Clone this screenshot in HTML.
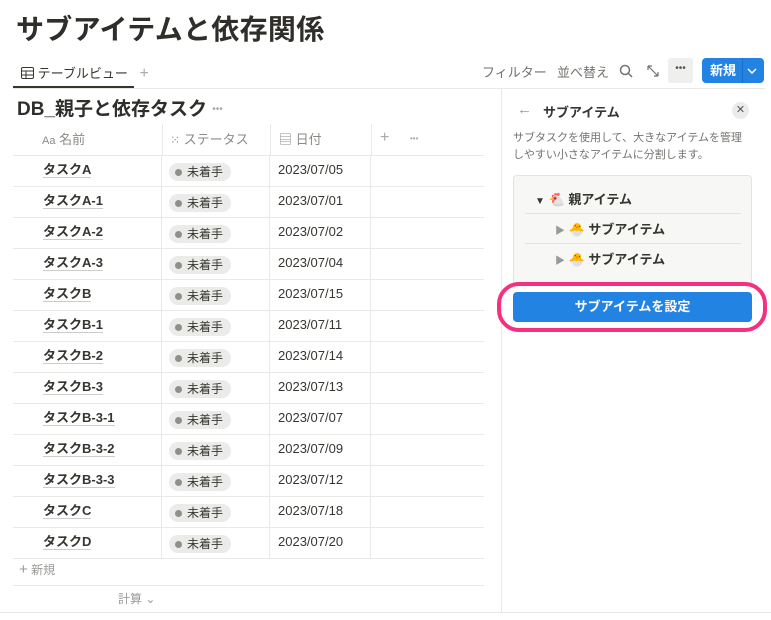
<!DOCTYPE html>
<html><head><meta charset="utf-8"><style>
*{margin:0;padding:0;box-sizing:border-box}
body{width:771px;height:620px;background:#fff;font-family:"Liberation Sans","Noto Sans CJK JP",sans-serif;color:#37352f;position:relative;overflow:hidden;font-size:13px}
.a{position:absolute}
.row{position:absolute;left:13px;width:471px;height:31px;border-bottom:1px solid #e9e9e7}
.c{position:absolute;top:0;height:30px;border-right:1px solid #e9e9e7;line-height:16px}
.nm{left:0;width:149px;padding:6px 0 0 30px;font-weight:bold;font-size:13px}
.nm span{border-bottom:1px solid #ccc}
.st{left:149px;width:108px;padding-top:7px;padding-left:7px}
.dt{left:257px;width:101px;padding:6px 0 0 8px;font-size:13px}
.pill{display:inline-block;background:#ebebea;border-radius:10px;padding:1px 8px 1px 6px;font-size:12px;line-height:16px}
.pill:before{content:"";display:inline-block;width:7px;height:7px;border-radius:50%;background:#918f8a;margin-right:5px;vertical-align:0}
.h{color:#8b8a86;font-size:13px}
</style></head><body>
<div class="a" style="left:16px;top:8px;font-size:28px;font-weight:bold;color:#2f2e2a;letter-spacing:0.3px">サブアイテムと依存関係</div>
<div class="a" style="left:21px;top:63px;font-size:13px">
<svg width="13" height="12" style="vertical-align:-1px"><rect x="0.5" y="0.5" width="12" height="11" rx="1.5" fill="none" stroke="#37352f"/><line x1="0" y1="4" x2="13" y2="4" stroke="#37352f"/><line x1="0" y1="8" x2="13" y2="8" stroke="#37352f"/><line x1="5" y1="4" x2="5" y2="12" stroke="#37352f"/></svg> テーブルビュー <span style="color:#aaa;font-size:16px;margin-left:8px">+</span></div>
<div class="a" style="left:13px;top:86px;width:121px;height:2px;background:#37352f"></div>
<div class="a" style="left:13px;top:88px;width:752px;height:1px;background:#e9e9e7"></div>
<div class="a h" style="left:482px;top:62px;color:#73726e">フィルター</div>
<div class="a h" style="left:557px;top:62px;color:#73726e">並べ替え</div>
<svg class="a" style="left:619px;top:64px" width="14" height="14"><circle cx="6" cy="6" r="4.5" fill="none" stroke="#73726e" stroke-width="1.5"/><line x1="9.5" y1="9.5" x2="13" y2="13" stroke="#73726e" stroke-width="1.5"/></svg>
<svg class="a" style="left:647px;top:65px" width="12" height="12"><path d="M1 1l10 10M1 1v4M1 1h4M11 11v-4M11 11h-4" stroke="#73726e" fill="none" stroke-width="1.2"/></svg>
<div class="a" style="left:668px;top:58px;width:25px;height:25px;background:#efefee;border-radius:3px;color:#555;text-align:center;line-height:22px;font-size:10px">•••</div>
<div class="a" style="left:702px;top:58px;width:62px;height:25px;background:#2383e2;border-radius:4px;color:#fff;font-weight:bold;font-size:13px;line-height:25px;padding-left:8px">新規</div>
<div class="a" style="left:742px;top:58px;width:1px;height:25px;background:#1a6fc4"></div>
<svg class="a" style="left:747px;top:67px" width="10" height="8"><path d="M1 2l4 4 4-4" stroke="#fff" fill="none" stroke-width="1.5"/></svg>

<div class="a" style="left:17px;top:98px;font-size:19px;font-weight:bold;color:#2f2e2a;line-height:24px">DB_親子と依存タスク <span style="color:#aaa;font-size:10px;font-weight:normal;vertical-align:3px">•••</span></div>
<div class="a" style="left:501px;top:89px;width:1px;height:524px;background:#e9e9e7"></div>
<div class="a" style="left:0;top:612px;width:771px;height:1px;background:#e9e9e7"></div>

<div class="row" style="top:124px;height:32px">
<div class="a h" style="left:29px;top:8px;line-height:16px"><span style="font-size:11px">Aa</span> 名前</div>
<div class="a h" style="left:157px;top:8px;line-height:16px"><span style="font-size:12px">⁙</span> ステータス</div>
<div class="a h" style="left:266px;top:8px;line-height:16px">▤ 日付</div>
<div class="a h" style="left:367px;top:5px;font-size:16px;color:#aaa">+</div>
<div class="a h" style="left:397px;top:10px;font-size:8px;color:#aaa">•••</div>
<div class="a" style="left:149px;top:0;width:1px;height:31px;background:#e9e9e7"></div>
<div class="a" style="left:257px;top:0;width:1px;height:31px;background:#e9e9e7"></div>
<div class="a" style="left:358px;top:0;width:1px;height:31px;background:#e9e9e7"></div>
</div>

<div class="row" style="top:156px"><div class="c nm"><span>タスクA</span></div><div class="c st"><span class="pill">未着手</span></div><div class="c dt">2023/07/05</div></div>
<div class="row" style="top:187px"><div class="c nm"><span>タスクA-1</span></div><div class="c st"><span class="pill">未着手</span></div><div class="c dt">2023/07/01</div></div>
<div class="row" style="top:218px"><div class="c nm"><span>タスクA-2</span></div><div class="c st"><span class="pill">未着手</span></div><div class="c dt">2023/07/02</div></div>
<div class="row" style="top:249px"><div class="c nm"><span>タスクA-3</span></div><div class="c st"><span class="pill">未着手</span></div><div class="c dt">2023/07/04</div></div>
<div class="row" style="top:280px"><div class="c nm"><span>タスクB</span></div><div class="c st"><span class="pill">未着手</span></div><div class="c dt">2023/07/15</div></div>
<div class="row" style="top:311px"><div class="c nm"><span>タスクB-1</span></div><div class="c st"><span class="pill">未着手</span></div><div class="c dt">2023/07/11</div></div>
<div class="row" style="top:342px"><div class="c nm"><span>タスクB-2</span></div><div class="c st"><span class="pill">未着手</span></div><div class="c dt">2023/07/14</div></div>
<div class="row" style="top:373px"><div class="c nm"><span>タスクB-3</span></div><div class="c st"><span class="pill">未着手</span></div><div class="c dt">2023/07/13</div></div>
<div class="row" style="top:404px"><div class="c nm"><span>タスクB-3-1</span></div><div class="c st"><span class="pill">未着手</span></div><div class="c dt">2023/07/07</div></div>
<div class="row" style="top:435px"><div class="c nm"><span>タスクB-3-2</span></div><div class="c st"><span class="pill">未着手</span></div><div class="c dt">2023/07/09</div></div>
<div class="row" style="top:466px"><div class="c nm"><span>タスクB-3-3</span></div><div class="c st"><span class="pill">未着手</span></div><div class="c dt">2023/07/12</div></div>
<div class="row" style="top:497px"><div class="c nm"><span>タスクC</span></div><div class="c st"><span class="pill">未着手</span></div><div class="c dt">2023/07/18</div></div>
<div class="row" style="top:528px"><div class="c nm"><span>タスクD</span></div><div class="c st"><span class="pill">未着手</span></div><div class="c dt">2023/07/20</div></div>
<div class="row" style="top:559px;height:27px"><div class="a h" style="left:6px;top:2px;color:#9b9a97;font-size:12px"><span style="font-size:15px">+</span> 新規</div></div>
<div class="a h" style="left:118px;top:590px;font-size:12px;color:#9b9a97">計算 ⌄</div>

<div class="a" style="left:517px;top:101px;color:#999;font-size:15px">←</div>
<div class="a" style="left:543px;top:102px;font-weight:bold;font-size:13px">サブアイテム</div>
<div class="a" style="left:732px;top:102px;width:17px;height:17px;border-radius:50%;background:#ebebea;color:#555;text-align:center;font-size:11px;line-height:17px">✕</div>
<div class="a" style="left:513px;top:130px;width:240px;font-size:11px;color:#73726e;line-height:17px">サブタスクを使用して、大きなアイテムを管理しやすい小さなアイテムに分割します。</div>
<div class="a" style="left:513px;top:175px;width:239px;height:110px;background:#f7f7f5;border:1px solid #e3e3e1;border-radius:4px"></div>
<div class="a" style="left:535px;top:189px;font-size:13px;font-weight:bold"><span style="font-size:10px">▼</span> 🐔 親アイテム</div>
<div class="a" style="left:525px;top:213px;width:216px;height:1px;background:#e3e3e1"></div>
<div class="a" style="left:555px;top:219px;font-size:13px;font-weight:bold"><span style="font-size:10px;color:#999">▶</span> 🐣 サブアイテム</div>
<div class="a" style="left:525px;top:243px;width:216px;height:1px;background:#e3e3e1"></div>
<div class="a" style="left:555px;top:249px;font-size:13px;font-weight:bold"><span style="font-size:10px;color:#999">▶</span> 🐣 サブアイテム</div>
<div class="a" style="left:497px;top:282px;width:270px;height:50px;border:4px solid #f5317f;border-radius:22px"></div>
<div class="a" style="left:513px;top:292px;width:239px;height:30px;background:#2383e2;border-radius:4px;color:#fff;font-weight:bold;font-size:13px;text-align:center;line-height:30px">サブアイテムを設定</div>
</body></html>
